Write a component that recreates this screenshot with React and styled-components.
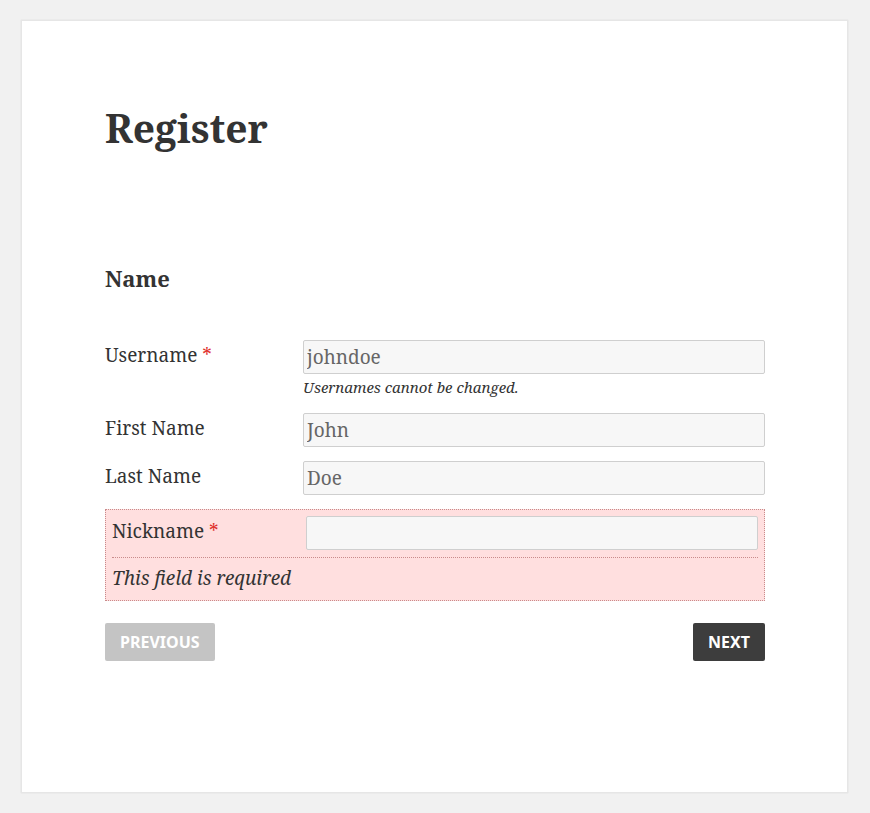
import React from "react";
import styled, { createGlobalStyle } from "styled-components";

const Global = createGlobalStyle`
  html, body { margin: 0; padding: 0; background: #f1f1f1; }
  body { font-family: "Noto Serif", "DejaVu Serif", serif; color: #333; }
  * { box-sizing: border-box; }
`;

const Page = styled.div`
  padding: 20px 22px 20px 21px;
`;

const Card = styled.main`
  background: #fff;
  box-shadow: 0 0 1px rgba(0,0,0,0.15);
  border: 1px solid #e6e6e6;
  padding: 84px 82px 130px 83px;
  min-height: 773px;
`;

const Title = styled.h1`
  margin: 0 0 112px;
  font-size: 39px;
  line-height: 1.2;
  font-weight: 700;
  color: #333;
`;

const Section = styled.h3`
  margin: 0 0 48px;
  font-size: 22px;
  line-height: 1.3;
  font-weight: 700;
  color: #333;
`;

const Row = styled.div`
  display: flex;
  align-items: flex-start;
  margin-bottom: ${(p) => p.$mb ?? 14}px;
`;

const Label = styled.label`
  width: 30%;
  flex: none;
  font-size: 19px;
  line-height: 1.5;
  padding-top: 1px;
  color: #333;
`;

const Req = styled.span`
  color: #e0302c;
`;

const Field = styled.div`
  width: 70%;
  flex: none;
`;

const Input = styled.input`
  display: block;
  width: 100%;
  height: 34px;
  border: 1px solid #cfcfcf;
  border-radius: 2px;
  background: #f7f7f7;
  font-family: "Noto Serif", "DejaVu Serif", serif;
  font-size: 19px;
  color: #666;
  padding: 0 3px;
`;

const Help = styled.div`
  font-size: 15px;
  font-style: italic;
  line-height: 1.5;
  color: #333;
  margin-top: 2px;
`;

const ErrorBox = styled.div`
  border: 1px dotted #c98b8b;
  background: #ffdfdf;
  padding: 6px 6px 8px;
  margin-bottom: 22px;
`;

const ErrorRow = styled.div`
  display: flex;
  align-items: flex-start;
  padding-bottom: 7px;
  border-bottom: 1px dotted #c98b8b;
`;

const ErrorText = styled.div`
  font-size: 19px;
  font-style: italic;
  line-height: 1.5;
  padding-top: 6px;
  color: #333;
`;

const Actions = styled.div`
  display: flex;
  justify-content: space-between;
`;

const Button = styled.button`
  border: 0;
  border-radius: 2px;
  height: 38px;
  padding: 0 15px;
  font-family: "Noto Sans", "Open Sans", sans-serif;
  font-weight: 700;
  font-size: 16px;
  text-transform: uppercase;
  color: #fff;
  background: ${(p) => (p.$dark ? "#3d3d3d" : "#c4c4c4")};
`;

export default function App() {
  return (
    <>
      <Global />
      <Page>
        <Card>
          <Title>Register</Title>
          <Section>Name</Section>
          <Row $mb={14}>
            <Label>Username <Req>*</Req></Label>
            <Field>
              <Input defaultValue="johndoe" readOnly />
              <Help>Usernames cannot be changed.</Help>
            </Field>
          </Row>
          <Row>
            <Label>First Name</Label>
            <Field>
              <Input defaultValue="John" />
            </Field>
          </Row>
          <Row>
            <Label>Last Name</Label>
            <Field>
              <Input defaultValue="Doe" />
            </Field>
          </Row>
          <ErrorBox>
            <ErrorRow>
              <Label>Nickname <Req>*</Req></Label>
              <Field>
                <Input defaultValue="" />
              </Field>
            </ErrorRow>
            <ErrorText>This field is required</ErrorText>
          </ErrorBox>
          <Actions>
            <Button>Previous</Button>
            <Button $dark>Next</Button>
          </Actions>
        </Card>
      </Page>
    </>
  );
}
